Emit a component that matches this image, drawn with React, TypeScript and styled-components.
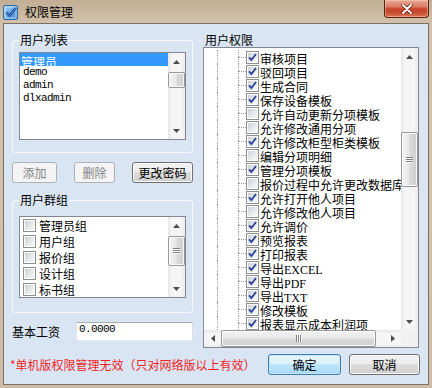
import styled, { createGlobalStyle } from 'styled-components'

const GlobalStyle = createGlobalStyle`
  html, body {
    margin: 0;
    padding: 0;
  }
  body {
    width: 432px;
    height: 388px;
    overflow: hidden;
    font: 12px "Noto Sans CJK SC", sans-serif;
    color: #000;
  }
  * {
    box-sizing: border-box;
  }
`

const Window = styled.div`
  width: 432px;
  height: 388px;
  display: flex;
  flex-direction: column;
  padding: 0 3px 3px;
  background: linear-gradient(180deg, #c2ae95 0%, #d2c1ab 23px, #cdbca6 100%);
`

const TitleBar = styled.header`
  height: 23px;
  flex: none;
  display: flex;
  align-items: flex-start;
`

const TitleIcon = styled.svg`
  flex: none;
  margin-top: 4px;
`

const TitleText = styled.span`
  margin: 5px 0 0 6px;
  line-height: 14px;
  font-size: 12px;
`

const CloseButton = styled.div`
  margin-left: auto;
  width: 45px;
  height: 18px;
  border: 1px solid #5a2016;
  border-top: 0;
  border-radius: 0 0 4px 4px;
  background: linear-gradient(180deg, #e9a996 0%, #dc7c64 40%, #c8452a 52%, #c84d30 75%, #dd7a5c 100%);
  box-shadow: inset 0 0 0 1px rgba(255, 220, 200, 0.45);
  display: grid;
  place-items: center;
`

const Client = styled.main`
  flex: 1;
  border: 1px solid #7b7064;
  background: #dae5f3;
  display: grid;
  grid-template-columns: 181px 216px;
  grid-template-rows: 311px 21px;
  column-gap: 10px;
  row-gap: 10px;
  padding: 9px 9px 9px 8px;
`

const LeftColumn = styled.section`
  display: flex;
  flex-direction: column;
`

const RightColumn = styled.section`
  display: flex;
  flex-direction: column;
`

const Group = styled.fieldset<{ $top: number; $bottom: number }>`
  margin: 0;
  min-width: 0;
  border: 1px solid #f6f9fd;
  border-radius: 3px;
  padding: ${p => p.$top}px 6px ${p => p.$bottom}px;
`

const Legend = styled.legend`
  padding: 0 1px;
  line-height: 14px;
  font-size: 12px;
`

const Caption = styled.div`
  height: 15px;
  line-height: 14px;
  padding-left: 2px;
`

const ListBox = styled.div<{ $height: number }>`
  height: ${p => p.$height}px;
  border: 1px solid #828790;
  background: #fff;
  display: flex;
`

const ListItems = styled.div`
  flex: 1;
  min-width: 0;
  overflow: hidden;
`

const UserItem = styled.div<{ $selected?: boolean; $latin?: boolean }>`
  height: 13px;
  line-height: 13px;
  padding-left: ${p => (p.$latin ? 3 : 1)}px;
  white-space: nowrap;
  background: ${p => (p.$selected ? '#3399ff' : 'transparent')};
  color: ${p => (p.$selected ? '#fff' : '#000')};
  font: ${p => (p.$latin ? '11px "Liberation Mono", monospace' : '12px "Noto Sans CJK SC", sans-serif')};
  letter-spacing: ${p => (p.$latin ? '-0.6px' : '0')};
`

const GroupItem = styled.div`
  height: 16px;
  display: flex;
  align-items: center;
  gap: 3px;
  padding-left: 3px;
  white-space: nowrap;
`

const ButtonRow = styled.div`
  margin-top: 9px;
  height: 21px;
  display: grid;
  grid-template-columns: 45px 41px 61px;
  justify-content: space-between;
`

const Button = styled.button<{ $primary?: boolean; $width?: number }>`
  height: 21px;
  width: ${p => (p.$width ? `${p.$width}px` : 'auto')};
  padding: 0;
  font: 12px "Noto Sans CJK SC", sans-serif;
  color: #000;
  border-radius: 3px;
  border: 1px solid ${p => (p.$primary ? '#3c7fb1' : '#707070')};
  background: ${p =>
    p.$primary
      ? 'linear-gradient(180deg, #eaf6fd 0%, #d9f0fc 50%, #bee6fd 50%, #a7d9f5 100%)'
      : 'linear-gradient(180deg, #f2f2f2 0%, #ebebeb 50%, #dddddd 50%, #cfcfcf 100%)'};
  box-shadow: inset 0 0 0 1px ${p => (p.$primary ? '#c5e6f8' : '#fbfbfb')};

  &:disabled {
    border-color: #adb2b5;
    background: #f4f4f4;
    color: #838383;
    box-shadow: none;
  }
`

const SalaryRow = styled.div`
  margin-top: 9px;
  height: 19px;
  display: flex;
  align-items: center;
  justify-content: space-between;
`

const SalaryInput = styled.div`
  width: 117px;
  height: 19px;
  border: 1px solid #abadb3;
  border-color: #abadb3 #dbdfe6 #e3e9ef #e2e3ea;
  background: #fff;
  padding-left: 2px;
  line-height: 17px;
  font: 11px "Liberation Mono", monospace;
  letter-spacing: -0.6px;
`

const Footer = styled.footer`
  grid-column: 1 / -1;
  display: flex;
  align-items: center;
`

const Note = styled.span`
  margin-left: -2px;
  color: #ef1f1f;
  line-height: 14px;
  white-space: nowrap;
`

const FooterButtons = styled.div`
  margin-left: auto;
  margin-right: -1px;
  display: flex;
  gap: 8px;
`

const Box = styled.span`
  flex: none;
  width: 13px;
  height: 13px;
  border: 1px solid #8e8f8f;
  background: #fff;
  padding: 1px;
  display: flex;
`

const BoxFill = styled.span`
  flex: 1;
  background: linear-gradient(135deg, #cdd1d7 0%, #e7e9ec 55%, #f8f8f8 100%);
  display: grid;
  place-items: center;
`

const TreeBox = styled.div`
  flex: 1;
  border: 1px solid #828790;
  background: #fff;
  display: grid;
  grid-template-columns: minmax(0, 1fr) 17px;
  grid-template-rows: minmax(0, 1fr) 17px;
`

const TreeBody = styled.div`
  overflow: hidden;
  padding-top: 2px;
`

const TreeRow = styled.div`
  height: 14px;
  display: flex;
  align-items: stretch;
  white-space: nowrap;
`

const Indent = styled.span`
  flex: none;
  width: 13px;
`

const Guide = styled.span`
  flex: none;
  width: 21px;
  border-left: 1px dotted #9a9a9a;
`

const Branch = styled.span`
  flex: none;
  width: 8px;
  display: flex;
  flex-direction: column;

  &::before {
    content: '';
    flex: 0 0 7px;
    border-left: 1px dotted #9a9a9a;
  }
  &::after {
    content: '';
    flex: 1;
    border-left: 1px dotted #9a9a9a;
    border-top: 1px dotted #9a9a9a;
  }
`

const TreeCheck = styled.span`
  flex: none;
  display: flex;
  align-items: center;
`

const TreeLabel = styled.span`
  margin-left: 1px;
  line-height: 14px;
  font: 12px "Liberation Serif", "Noto Sans CJK SC", serif;
`

const Corner = styled.div`
  background: #f0f0f0;
`

const VTrack = styled.div`
  width: 17px;
  display: flex;
  flex-direction: column;
  background: linear-gradient(90deg, #e3e3e3 0, #ececec 1px, #f5f5f5 4px, #f5f5f5 13px, #ededed 16px);
`

const HTrack = styled.div`
  height: 17px;
  display: flex;
  background: linear-gradient(180deg, #e3e3e3 0, #ececec 1px, #f5f5f5 4px, #f5f5f5 13px, #ededed 16px);
`

const Arrow = styled.div`
  flex: none;
  width: 17px;
  height: 17px;
  display: grid;
  place-items: center;
`

const VThumb = styled.div<{ $offset: number; $size: number }>`
  flex: none;
  margin-top: ${p => p.$offset}px;
  height: ${p => p.$size}px;
  border: 1px solid #979797;
  border-radius: 2px;
  background: linear-gradient(90deg, #f3f3f3 0%, #e8e8e8 45%, #d9d9d9 55%, #cfcfcf 100%);
  box-shadow: inset 0 0 0 1px rgba(255, 255, 255, 0.85);
  display: grid;
  place-items: center;
`

const HThumb = styled.div<{ $offset: number; $size: number }>`
  flex: none;
  margin-left: ${p => p.$offset}px;
  width: ${p => p.$size}px;
  border: 1px solid #979797;
  border-radius: 2px;
  background: linear-gradient(180deg, #f3f3f3 0%, #e8e8e8 45%, #d9d9d9 55%, #cfcfcf 100%);
  box-shadow: inset 0 0 0 1px rgba(255, 255, 255, 0.85);
  display: grid;
  place-items: center;
`

const VGrip = styled.span`
  width: 7px;
  height: 6px;
  background: repeating-linear-gradient(180deg, #7f7f7f 0 1px, #fdfdfd 1px 2px);
`

const HGrip = styled.span`
  width: 6px;
  height: 7px;
  background: repeating-linear-gradient(90deg, #7f7f7f 0 1px, #fdfdfd 1px 2px);
`

const Fill = styled.div`
  flex: 1;
`

type Dir = 'up' | 'down' | 'left' | 'right'

const arrowPoints: Record<Dir, string> = {
  up: '3.5,0 7,4 0,4',
  down: '0,0 7,0 3.5,4',
  left: '4,0 4,7 0,3.5',
  right: '0,0 0,7 4,3.5',
}

const ArrowGlyph = ({ dir }: { dir: Dir }) => {
  const vertical = dir === 'up' || dir === 'down'
  return (
    <Arrow>
      <svg width={vertical ? 7 : 4} height={vertical ? 4 : 7}>
        <polygon points={arrowPoints[dir]} fill="#4d4d4d" />
      </svg>
    </Arrow>
  )
}

const VScroll = ({ offset, size, grip }: { offset: number; size: number; grip?: boolean }) => (
  <VTrack>
    <ArrowGlyph dir="up" />
    <VThumb $offset={offset} $size={size}>{grip && <VGrip />}</VThumb>
    <Fill />
    <ArrowGlyph dir="down" />
  </VTrack>
)

const HScroll = ({ offset, size }: { offset: number; size: number }) => (
  <HTrack>
    <ArrowGlyph dir="left" />
    <HThumb $offset={offset} $size={size}><HGrip /></HThumb>
    <Fill />
    <ArrowGlyph dir="right" />
  </HTrack>
)

const CheckBox = ({ checked }: { checked?: boolean }) => (
  <Box>
    <BoxFill>
      {checked && (
        <svg width="9" height="9" viewBox="0 0 9 9" style={{ overflow: 'visible' }}>
          <path d="M1 4.3 L3.4 7 L8 1" fill="none" stroke="#2f4595" strokeWidth="1.9" />
        </svg>
      )}
    </BoxFill>
  </Box>
)

const users = ['管理员', 'demo', 'admin', 'dlxadmin']
const groups = ['管理员组', '用户组', '报价组', '设计组', '标书组']

const perms: [string, boolean][] = [
  ['审核项目', true],
  ['驳回项目', true],
  ['生成合同', true],
  ['保存设备模板', true],
  ['允许自动更新分项模板', false],
  ['允许修改通用分项', false],
  ['允许修改柜型柜类模板', true],
  ['编辑分项明细', false],
  ['管理分项模板', true],
  ['报价过程中允许更改数据库', false],
  ['允许打开他人项目', true],
  ['允许修改他人项目', false],
  ['允许调价', true],
  ['预览报表', true],
  ['打印报表', true],
  ['导出EXCEL', true],
  ['导出PDF', true],
  ['导出TXT', true],
  ['修改模板', true],
  ['报表显示成本利润项', true],
]

export default function App() {
  return (
    <>
      <GlobalStyle />
      <Window>
        <TitleBar>
          <TitleIcon width="16" height="16" viewBox="0 0 16 16">
            <defs>
              <linearGradient id="ic" x1="0" y1="0" x2="1" y2="1">
                <stop offset="0" stopColor="#9fd0f5" />
                <stop offset="1" stopColor="#3a86d0" />
              </linearGradient>
            </defs>
            <rect x="0.5" y="1.5" width="14" height="14" rx="1.5" fill="url(#ic)" stroke="#2d6aa8" />
            <rect x="2" y="3" width="11" height="11" fill="none" stroke="#e6f4ff" strokeOpacity="0.7" />
            <path d="M3.5 8.5 L6.5 11.5 L13 4" fill="none" stroke="#1d3f8e" strokeWidth="2.4" />
            <path d="M3.5 8.5 L6.5 11.5 L13 4" fill="none" stroke="#5a8ee0" strokeWidth="1" />
          </TitleIcon>
          <TitleText>权限管理</TitleText>
          <CloseButton>
            <svg width="12" height="10" viewBox="0 0 12 10">
              <path d="M2 1 L10 9 M10 1 L2 9" stroke="#5b1a10" strokeWidth="3.4" strokeLinecap="round" />
              <path d="M2 1 L10 9 M10 1 L2 9" stroke="#fff" strokeWidth="2" strokeLinecap="round" />
            </svg>
          </CloseButton>
        </TitleBar>
        <Client>
          <LeftColumn>
            <Group $top={5} $bottom={12}>
              <Legend>用户列表</Legend>
              <ListBox $height={88}>
                <ListItems>
                  {users.map((u, i) => (
                    <UserItem key={u} $selected={i === 0} $latin={i > 0}>{u}</UserItem>
                  ))}
                </ListItems>
                <VScroll offset={2} size={16} />
              </ListBox>
            </Group>
            <ButtonRow>
              <Button disabled>添加</Button>
              <Button disabled>删除</Button>
              <Button>更改密码</Button>
            </ButtonRow>
            <Group $top={9} $bottom={14} style={{ marginTop: 10 }}>
              <Legend>用户群组</Legend>
              <ListBox $height={82}>
                <ListItems>
                  {groups.map(g => (
                    <GroupItem key={g}>
                      <CheckBox />
                      <span>{g}</span>
                    </GroupItem>
                  ))}
                </ListItems>
                <VScroll offset={2} size={30} grip />
              </ListBox>
            </Group>
            <SalaryRow>
              <span>基本工资</span>
              <SalaryInput>0.0000</SalaryInput>
            </SalaryRow>
          </LeftColumn>
          <RightColumn>
            <Caption>用户权限</Caption>
            <TreeBox>
              <TreeBody>
                {perms.map(([name, on]) => (
                  <TreeRow key={name}>
                    <Indent />
                    <Guide />
                    <Branch />
                    <TreeCheck>
                      <CheckBox checked={on} />
                    </TreeCheck>
                    <TreeLabel>{name}</TreeLabel>
                  </TreeRow>
                ))}
              </TreeBody>
              <VScroll offset={67} size={55} grip />
              <HScroll offset={0} size={155} />
              <Corner />
            </TreeBox>
          </RightColumn>
          <Footer>
            <Note>*单机版权限管理无效（只对网络版以上有效）</Note>
            <FooterButtons>
              <Button $primary $width={73}>确定</Button>
              <Button $width={71}>取消</Button>
            </FooterButtons>
          </Footer>
        </Client>
      </Window>
    </>
  )
}
